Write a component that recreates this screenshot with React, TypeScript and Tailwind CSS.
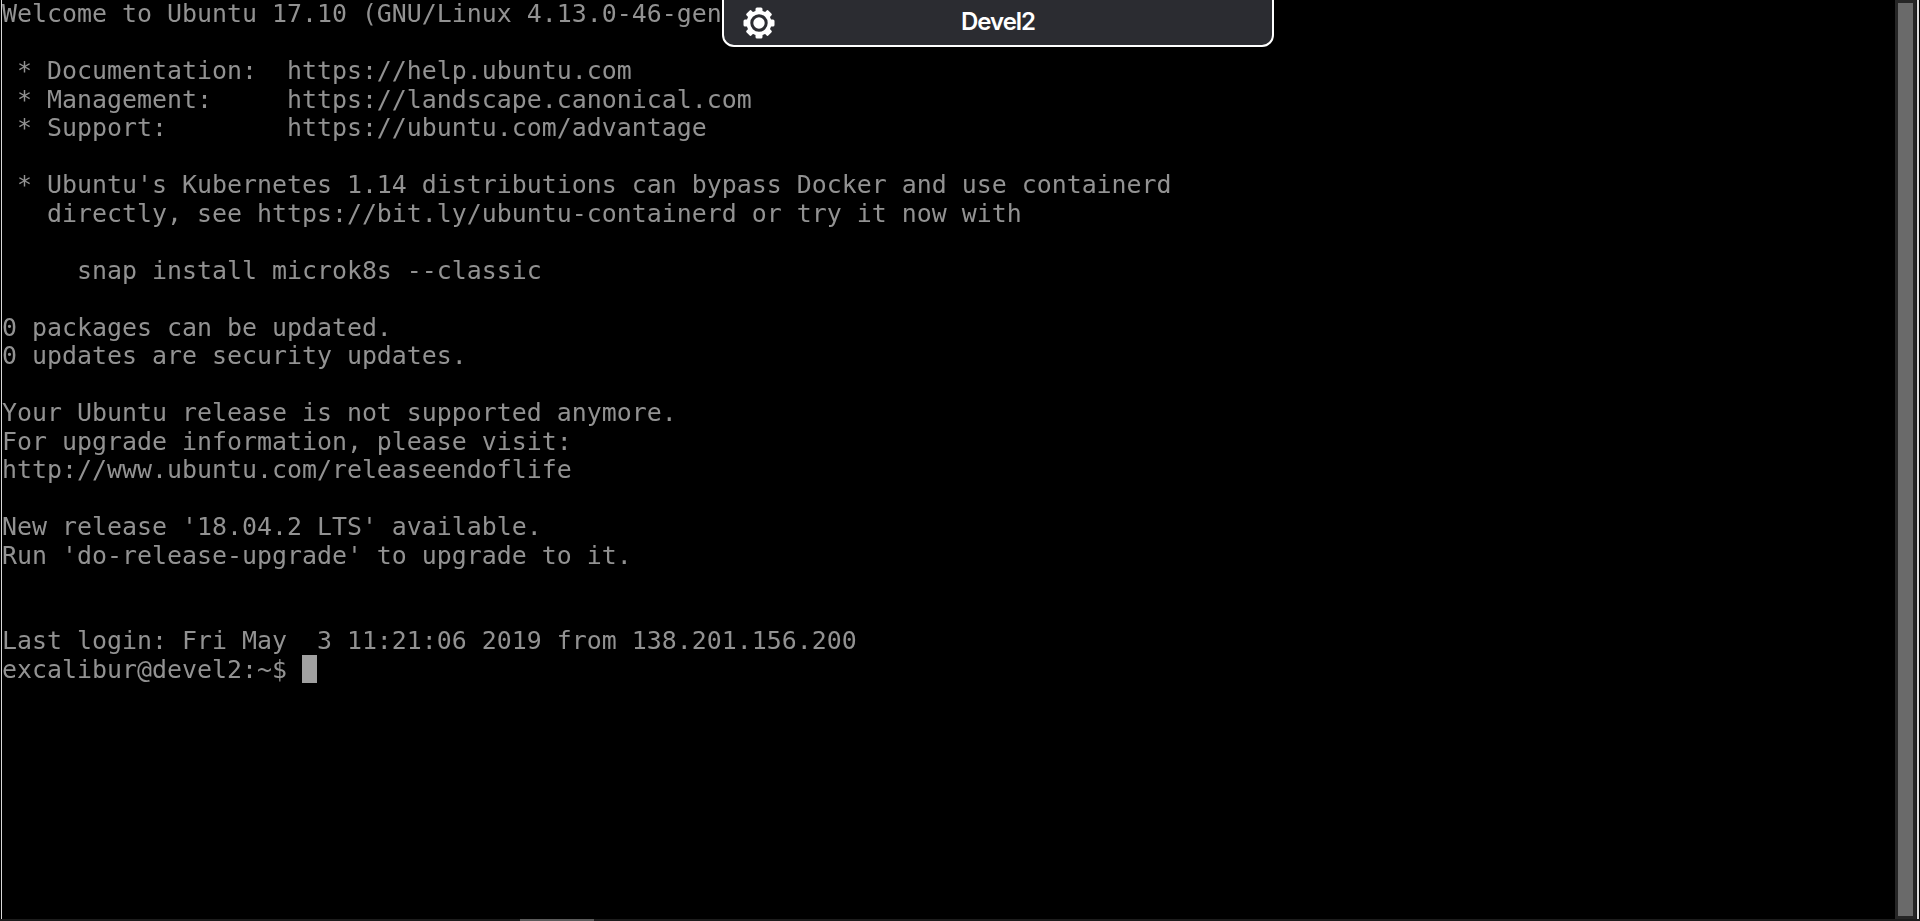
const lines = [
  "Welcome to Ubuntu 17.10 (GNU/Linux 4.13.0-46-generic x86_64)",
  "",
  " * Documentation:  https://help.ubuntu.com",
  " * Management:     https://landscape.canonical.com",
  " * Support:        https://ubuntu.com/advantage",
  "",
  " * Ubuntu's Kubernetes 1.14 distributions can bypass Docker and use containerd",
  "   directly, see https://bit.ly/ubuntu-containerd or try it now with",
  "",
  "     snap install microk8s --classic",
  "",
  "0 packages can be updated.",
  "0 updates are security updates.",
  "",
  "Your Ubuntu release is not supported anymore.",
  "For upgrade information, please visit:",
  "http://www.ubuntu.com/releaseendoflife",
  "",
  "New release '18.04.2 LTS' available.",
  "Run 'do-release-upgrade' to upgrade to it.",
  "",
  "",
  "Last login: Fri May  3 11:21:06 2019 from 138.201.156.200",
];

const teeth = [0, 45, 90, 135, 180, 225, 270, 315];

function GearIcon() {
  return (
    <svg width="32" height="32" viewBox="0 0 32 32" className="shrink-0">
      {teeth.map((angle) => (
        <rect key={angle} x="12.5" y="0.5" width="7" height="7" rx="1.5" fill="#ffffff" transform={`rotate(${angle} 16 16)`} />
      ))}
      <circle cx="16" cy="16" r="12.5" fill="#ffffff" />
      <circle cx="16" cy="16" r="7.2" fill="#ffffff" stroke="#2b2c31" strokeWidth="3" />
    </svg>
  );
}

export default function App() {
  return (
    <div className="relative h-screen w-full overflow-hidden bg-black flex flex-col">
      <div className="flex flex-1 min-h-0">
        <div className="w-px bg-black" />
        <div className="w-px bg-[#d8d8d8]" />
        <div className="flex-1 min-w-0 overflow-hidden">
          <pre className="font-['DejaVu_Sans_Mono',monospace] text-[24.92px] leading-[28.5px] text-[#929292] blur-[0.5px]">
            {lines.map((line) => line + "\n")}
            excalibur@devel2:~$ <span className="inline-block h-[28px] w-[15px] -translate-y-px bg-[#a0a0a0] align-[-6px]" />
          </pre>
        </div>
        <div className="w-[22px] bg-[#262626] pl-[3px] pr-[3px] pb-[3px] pt-[3px] border-r border-[#1a1a1a]">
          <div className="h-full bg-[#6a6a6a]" />
        </div>
        <div className="w-[2px] bg-[#e0e0e0]" />
        <div className="w-px bg-black" />
      </div>
      <div className="h-[2px] bg-[#1c1c1c] flex">
        <div className="ml-[520px] w-[74px] bg-[#5a5a5a]" />
      </div>

      <div className="absolute left-[722px] top-[-2px] h-[49px] w-[552px] rounded-b-[12px] border-2 border-white bg-[#2b2c31] flex items-center pl-[19px]">
        <GearIcon />
        <div className="absolute left-0 right-0 top-[6px] text-center font-['Inter',sans-serif] text-[24px] font-semibold leading-[32px] tracking-[-1px] text-white">
          Devel2
        </div>
      </div>
    </div>
  );
}
